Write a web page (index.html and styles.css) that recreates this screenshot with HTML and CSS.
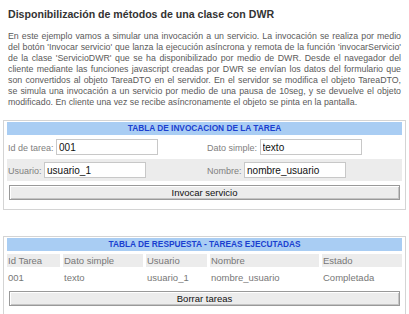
FILE: index.html
```html
<!DOCTYPE html>
<html lang="es">
<head>
    <meta charset="UTF-8">
    <title>DWR - Invocar servicio</title>
    <link rel="stylesheet" href="styles.css">
</head>
<body>
    <h1 class="title">Disponibilización de métodos de una clase con DWR</h1>
    <p class="intro">
        <span class="line">En este ejemplo vamos a simular una invocación a un servicio. La invocación se realiza por medio</span>
        <span class="line">del botón 'Invocar servicio' que lanza la ejecución asíncrona y remota de la función 'invocarServicio'</span>
        <span class="line">de la clase 'ServicioDWR' que se ha disponibilizado por medio de DWR. Desde el navegador del</span>
        <span class="line">cliente mediante las funciones javascript creadas por DWR se envían los datos del formulario que</span>
        <span class="line">son convertidos al objeto TareaDTO en el servidor. En el servidor se modifica el objeto TareaDTO,</span>
        <span class="line">se simula una invocación a un servicio por medio de una pausa de 10seg, y se devuelve el objeto</span>
        <span class="line last">modificado. En cliente una vez se recibe asíncronamente el objeto se pinta en la pantalla.</span>
    </p>

    <div class="panel panel-invoke">
        <div class="panel-head">TABLA DE INVOCACION DE LA TAREA</div>
        <div class="form-row">
            <label>Id de tarea: <input type="text" value="001"></label>
            <label>Dato simple: <input type="text" value="texto"></label>
        </div>
        <div class="form-row alt">
            <label>Usuario: <input type="text" value="usuario_1"></label>
            <label>Nombre: <input type="text" value="nombre_usuario"></label>
        </div>
        <button class="wide-btn">Invocar servicio</button>
    </div>

    <div class="panel panel-result">
        <div class="panel-head">TABLA DE RESPUESTA - TAREAS EJECUTADAS</div>
        <table class="result-table">
            <thead>
                <tr>
                    <th class="c-id">Id Tarea</th>
                    <th class="c-dato">Dato simple</th>
                    <th class="c-user">Usuario</th>
                    <th class="c-name">Nombre</th>
                    <th>Estado</th>
                </tr>
            </thead>
            <tbody>
                <tr>
                    <td>001</td>
                    <td>texto</td>
                    <td>usuario_1</td>
                    <td>nombre_usuario</td>
                    <td>Completada</td>
                </tr>
            </tbody>
        </table>
        <button class="wide-btn">Borrar tareas</button>
    </div>
</body>
</html>
```

FILE: styles.css
```css
body {
    font-family: 'Liberation Sans', Arial, sans-serif;
    font-size: 9.5px;
    color: #666;
    background-color: #fff;
    margin: 0;
    padding: 0 3px;
}

.title {
    font-size: 10.6px;
    font-weight: bold;
    color: #333;
    margin: 0;
    padding: 8px 5px 0;
    line-height: 12px;
}

.intro {
    margin: 11px 0 0;
    padding: 0 5px;
    line-height: 11px;
    font-size: 8.8px;
    color: #5a5a5a;
}

/* each source line is kept and stretched to the full width */
.intro .line {
    display: block;
    white-space: nowrap;
    text-align: justify;
    text-align-last: justify;
}

.intro .line.last {
    text-align-last: left;
}

.panel {
    border: 1px solid #d4d4d4;
    padding: 1px 3px 3px;
}

.panel-invoke {
    margin-top: 12px;
}

.panel-result {
    margin-top: 26px;
}

.panel-head {
    background-color: #a9cdf3;
    color: #1a3fd0;
    font-size: 8.3px;
    font-weight: bold;
    text-align: center;
    height: 13px;
    line-height: 13px;
}

.form-row {
    display: grid;
    grid-template-columns: 199px 1fr;
    align-items: center;
    height: 22px;
    margin-top: 1px;
    padding-left: 1px;
}

.form-row.alt {
    background-color: #ececec;
}

.form-row label {
    color: #808080;
    font-size: 9px;
}

.form-row input {
    font-family: 'Liberation Sans', Arial, sans-serif;
    font-size: 10px;
    color: #111;
    width: 96px;
    height: 12px;
    padding: 1px 2px;
    border: 1px solid #c8c8c8;
    margin: 0;
}

.wide-btn {
    display: block;
    width: calc(100% - 4px);
    margin: 4px 2px 6px;
    height: 15px;
    padding: 0;
    font-family: 'Liberation Sans', Arial, sans-serif;
    font-size: 9.5px;
    color: #111;
    background-color: #ececec;
    border: 1px solid #999;
    box-shadow: inset 1px 1px #fff, inset -1px -1px #c4c4c4;
}

.result-table {
    width: 100%;
    border-collapse: separate;
    border-spacing: 0 2px;
    margin-top: 1px;
}

.result-table th,
.result-table td {
    text-align: left;
    font-weight: normal;
    color: #777;
    padding: 0 1px;
    height: 13px;
    line-height: 13px;
}

.result-table th {
    background-color: #ececec;
    border-right: 3px solid #fff;
}

.result-table th:last-child {
    border-right: none;
}

.result-table td {
    height: 16px;
}

.result-table .c-id { width: 51px; }
.result-table .c-dato { width: 78px; }
.result-table .c-user { width: 59px; }
.result-table .c-name { width: 107px; }
```
